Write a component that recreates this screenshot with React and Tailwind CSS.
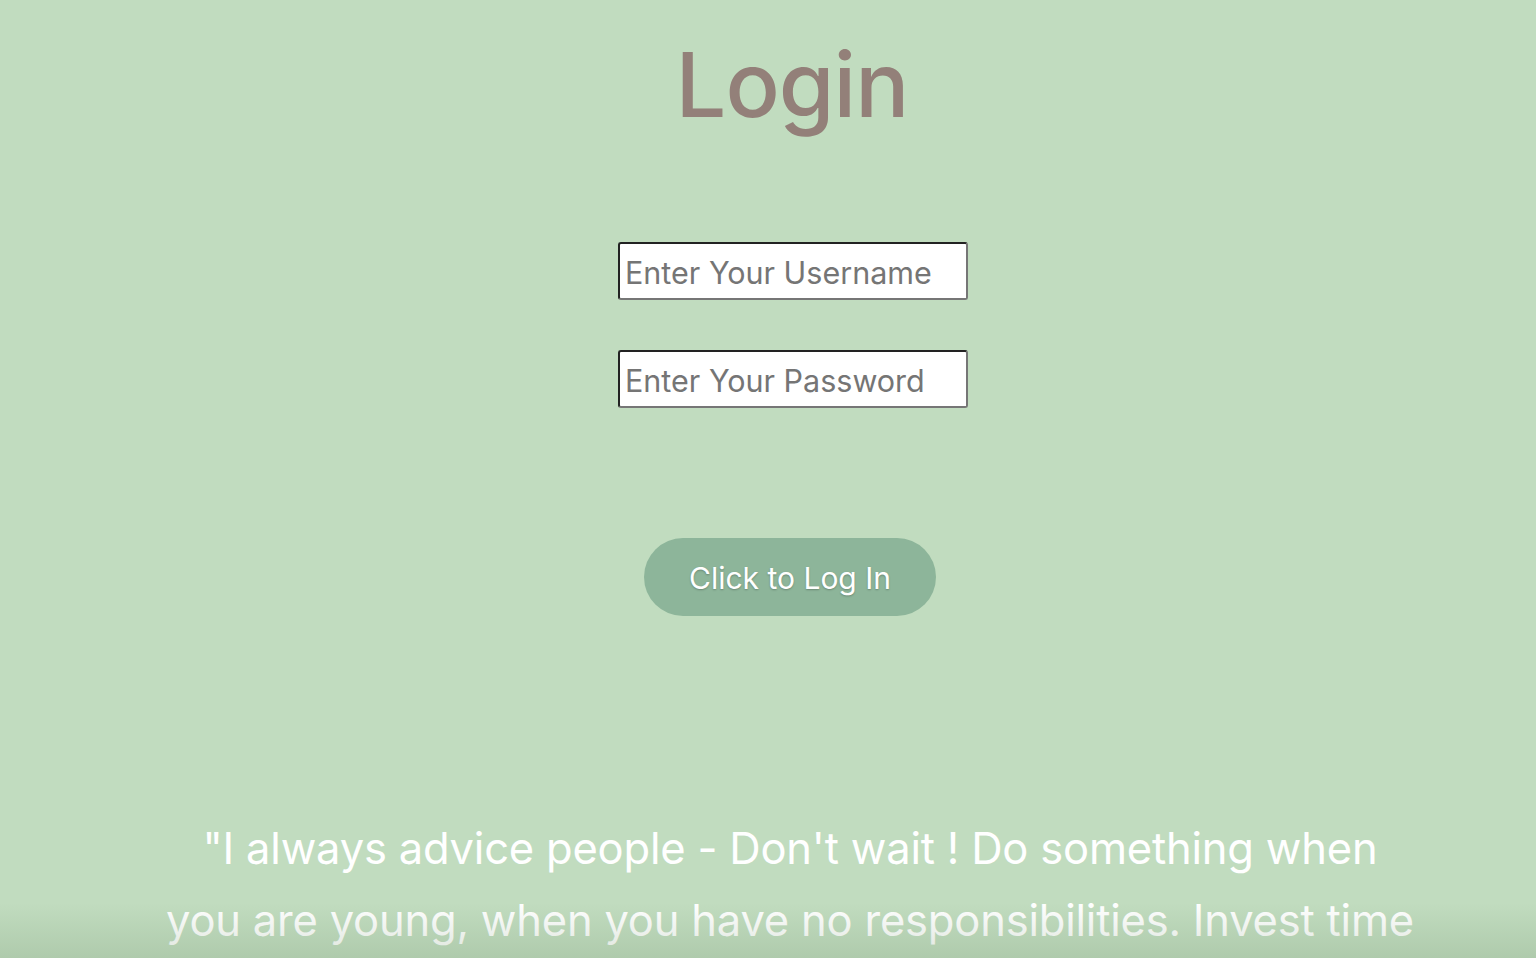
export default function App() {
  return (
    <div className="relative min-h-[958px] h-[958px] overflow-hidden bg-[#c1dcbf] font-['Inter','Noto_Sans',sans-serif]">
      <div className="flex flex-col items-center pl-[44px]">
        <h1 className="mt-[33px] ml-[4px] text-[90px] leading-[104px] font-medium tracking-[-1px] text-[#938079]">Login</h1>
        <input
          className="mt-[105px] ml-[6px] w-[350px] h-[58px] bg-white rounded-[3px] border-2 border-t-[#222] border-l-[#222] border-b-[#767676] border-r-[#767676] pl-[5px] pt-[3px] text-[30.5px] placeholder:text-[#757575] outline-none"
          placeholder="Enter Your Username"
        />
        <input
          className="mt-[50px] ml-[6px] w-[350px] h-[58px] bg-white rounded-[3px] border-2 border-t-[#222] border-l-[#222] border-b-[#767676] border-r-[#767676] pl-[5px] pt-[3px] text-[30.5px] placeholder:text-[#757575] outline-none"
          placeholder="Enter Your Password"
          type="password"
        />
        <button className="mt-[130px] w-[292px] h-[78px] rounded-full bg-[#8db59a] text-white text-[30px] pt-[3px] [text-shadow:0_1px_2px_rgba(0,0,0,0.25)]">
          Click to Log In
        </button>
        <p className="mt-[196px] w-[1256px] text-center text-white text-[43.5px] tracking-[-0.2px] leading-[72px]">
          "I always advice people - Don't wait ! Do something when you are young, when you have no responsibilities. Invest time and energy in yourself."
        </p>
      </div>
      <div className="pointer-events-none absolute bottom-0 left-0 right-0 h-[55px] bg-gradient-to-b from-transparent to-[rgba(120,150,115,0.25)]"></div>
    </div>
  );
}
